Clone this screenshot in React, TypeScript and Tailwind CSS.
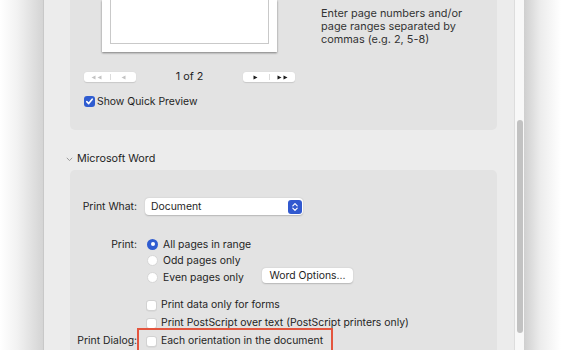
import React from "react";

const font = { fontFamily: "Inter, 'Liberation Sans', sans-serif" };

function Checkbox({ checked = false }: { checked?: boolean }) {
  if (checked) {
    return (
      <div className="w-[11px] h-[11px] rounded-[3px] bg-[#2f5cd0] flex items-center justify-center shrink-0">
        <svg width="9" height="9" viewBox="0 0 9 9">
          <path d="M1.8 4.6 L3.7 6.6 L7.2 2.2" stroke="white" strokeWidth="1.6" fill="none" strokeLinecap="round" strokeLinejoin="round" />
        </svg>
      </div>
    );
  }
  return <div className="w-[11px] h-[11px] rounded-[3px] bg-white border border-[#d2d2d2] shadow-[0_0.5px_0.5px_rgba(0,0,0,0.08)] shrink-0" />;
}

function Radio({ checked = false }: { checked?: boolean }) {
  if (checked) {
    return (
      <div className="w-[11px] h-[11px] rounded-full bg-[#2f5cd0] flex items-center justify-center shrink-0">
        <div className="w-[4px] h-[4px] rounded-full bg-white" />
      </div>
    );
  }
  return <div className="w-[11px] h-[11px] rounded-full bg-white border border-[#d6d6d6] shrink-0" />;
}

function NavGroup({ disabled, dir }: { disabled: boolean; dir: "back" | "fwd" }) {
  const c = disabled ? "#c4c4c4" : "#1a1a1a";
  const single = (flip: boolean) => (
    <svg width="5" height="5" viewBox="0 0 5 5" style={{ transform: flip ? "scaleX(-1)" : undefined }}>
      <path d="M0.5 0.5 L4.5 2.5 L0.5 4.5 Z" fill={c} />
    </svg>
  );
  const flip = dir === "back";
  const one = <div className="flex items-center">{single(flip)}</div>;
  const two = (
    <div className="flex items-center gap-[1px]">
      {single(flip)}
      {single(flip)}
    </div>
  );
  return (
    <div className="w-[52px] h-[10px] bg-white rounded-[3px] shadow-[0_0.5px_1px_rgba(0,0,0,0.12)] flex items-center">
      <div className="flex-1 flex justify-center">{dir === "back" ? two : one}</div>
      <div className="w-px h-[6px] bg-[#dcdcdc]" />
      <div className="flex-1 flex justify-center">{dir === "back" ? one : two}</div>
    </div>
  );
}

export default function App() {
  return (
    <div className="w-[570px] h-[350px] overflow-hidden flex bg-white text-[#1f1f1f] text-[10.4px] leading-none" style={font}>
      {/* left shadow */}
      <div className="w-[44px] h-full shrink-0 bg-[linear-gradient(to_right,#ffffff,#f2f2f2_40%,#d4d4d4)] border-r border-[#c8c8c8]" />
      {/* window */}
      <div className="w-[480px] h-full shrink-0 bg-[#ececec] flex">
        <div className="w-[470px] h-full flex flex-col overflow-hidden">
          {/* panel 1 */}
          <div className="shrink-0 ml-[26px] mr-[17px] h-[130px] bg-[#e3e3e3] rounded-b-[5px] flex">
            <div className="w-[251px] pl-[14px] flex flex-col">
              <div className="ml-[18px] w-[175px] h-[52px] bg-white shadow-[0_1px_2px_rgba(0,0,0,0.45)] flex px-[8px] pb-[8px]">
                <div className="flex-1 border-x border-b border-[#c9c9c9]" />
              </div>
              <div className="mt-[20px] flex items-center h-[10px]">
                <NavGroup disabled dir="back" />
                <div className="w-[107px] text-center text-[10.8px] pt-[1px]">1 of 2</div>
                <NavGroup disabled={false} dir="fwd" />
              </div>
              <div className="mt-[14px] flex items-center gap-[2px] h-[11px]">
                <Checkbox checked />
                <span className="pt-[1px]">Show Quick Preview</span>
              </div>
            </div>
            <div className="pt-[7px] text-[#333333] leading-[13px] text-[10.9px]">
              <div>Enter page numbers and/or</div>
              <div>page ranges separated by</div>
              <div>commas (e.g. 2, 5-8)</div>
            </div>
          </div>

          {/* section header */}
          <div className="shrink-0 mt-[22px] h-[14px] flex items-center pl-[22px]">
            <svg width="7" height="5" viewBox="0 0 7 5">
              <path d="M0.8 0.8 L3.5 3.6 L6.2 0.8" stroke="#9a9a9a" strokeWidth="1" fill="none" />
            </svg>
            <span className="ml-[4px] text-[10.8px] pt-[1px]">Microsoft Word</span>
          </div>

          {/* panel 2 */}
          <div className="shrink-0 mt-[4px] ml-[26px] mr-[17px] h-[200px] bg-[#e3e3e3] rounded-t-[5px] pt-[28px]">
            {/* Print What */}
            <div className="flex items-center h-[17px]">
              <div className="w-[67px] text-right pt-[1px]">Print What:</div>
              <div className="ml-[8px] w-[158px] h-[17px] bg-white rounded-[4px] shadow-[0_0.5px_1.5px_rgba(0,0,0,0.2)] flex items-center pl-[6px] pr-[1px]">
                <span className="flex-1 pt-[1px]">Document</span>
                <div className="w-[14px] h-[14px] rounded-[3px] bg-[#3159cf] flex items-center justify-center">
                  <svg width="8" height="10" viewBox="0 0 8 10">
                    <path d="M1.8 3.8 L4 1.6 L6.2 3.8 M1.8 6.2 L4 8.4 L6.2 6.2" stroke="white" strokeWidth="1.2" fill="none" strokeLinecap="round" strokeLinejoin="round" />
                  </svg>
                </div>
              </div>
            </div>

            {/* Print radios */}
            <div className="mt-[21px] flex">
              <div className="w-[67px] text-right h-[16.5px] flex items-center justify-end pt-[1px]">Print:</div>
              <div className="ml-[8px] flex flex-col">
                <div className="h-[16.5px] flex items-center pl-[2px] gap-[5px]">
                  <Radio checked />
                  <span className="pt-[1px]">All pages in range</span>
                </div>
                <div className="h-[16.5px] flex items-center pl-[2px] gap-[5px]">
                  <Radio />
                  <span className="pt-[1px]">Odd pages only</span>
                </div>
                <div className="h-[16.5px] flex items-center">
                  <div className="w-[117px] flex items-center pl-[2px] gap-[5px]">
                    <Radio />
                    <span className="pt-[1px]">Even pages only</span>
                  </div>
                  <div className="w-[91px] h-[15px] -mt-[3px] bg-white rounded-[4px] shadow-[0_0.5px_1.5px_rgba(0,0,0,0.2)] flex items-center justify-center pt-[1px]">
                    Word Options...
                  </div>
                </div>
              </div>
            </div>

            {/* checkboxes */}
            <div className="mt-[10.5px] flex flex-col">
              <div className="h-[18px] flex items-center">
                <div className="w-[67px]" />
                <div className="ml-[9px] flex items-center gap-[4px]">
                  <Checkbox />
                  <span className="pt-[1px]">Print data only for forms</span>
                </div>
              </div>
              <div className="h-[18px] flex items-center">
                <div className="w-[67px]" />
                <div className="ml-[9px] flex items-center gap-[4px]">
                  <Checkbox />
                  <span className="pt-[1px]">Print PostScript over text (PostScript printers only)</span>
                </div>
              </div>
              <div className="h-[18px] flex items-center">
                <div className="w-[67px] text-right pt-[1px]">Print Dialog:</div>
                <div className="ml-[9px] relative flex items-center gap-[4px]">
                  <Checkbox />
                  <span className="pt-[1px]">Each orientation in the document</span>
                  <div className="absolute left-[-9px] top-[-7px] w-[196px] h-[40px] border-2 border-[#e4553e]" />
                </div>
              </div>
            </div>
          </div>
        </div>
        {/* scrollbar */}
        <div className="w-[10px] h-full bg-[#f8f8f8] border-l border-[#dddddd] flex justify-center">
          <div className="mt-[120px] w-[6px] h-[213px] rounded-full bg-[#c2c2c2]" />
        </div>
      </div>
      {/* right shadow */}
      <div className="flex-1 h-full bg-[linear-gradient(to_right,#cfcfcf,#ececec_35%,#ffffff_80%)]" />
    </div>
  );
}
